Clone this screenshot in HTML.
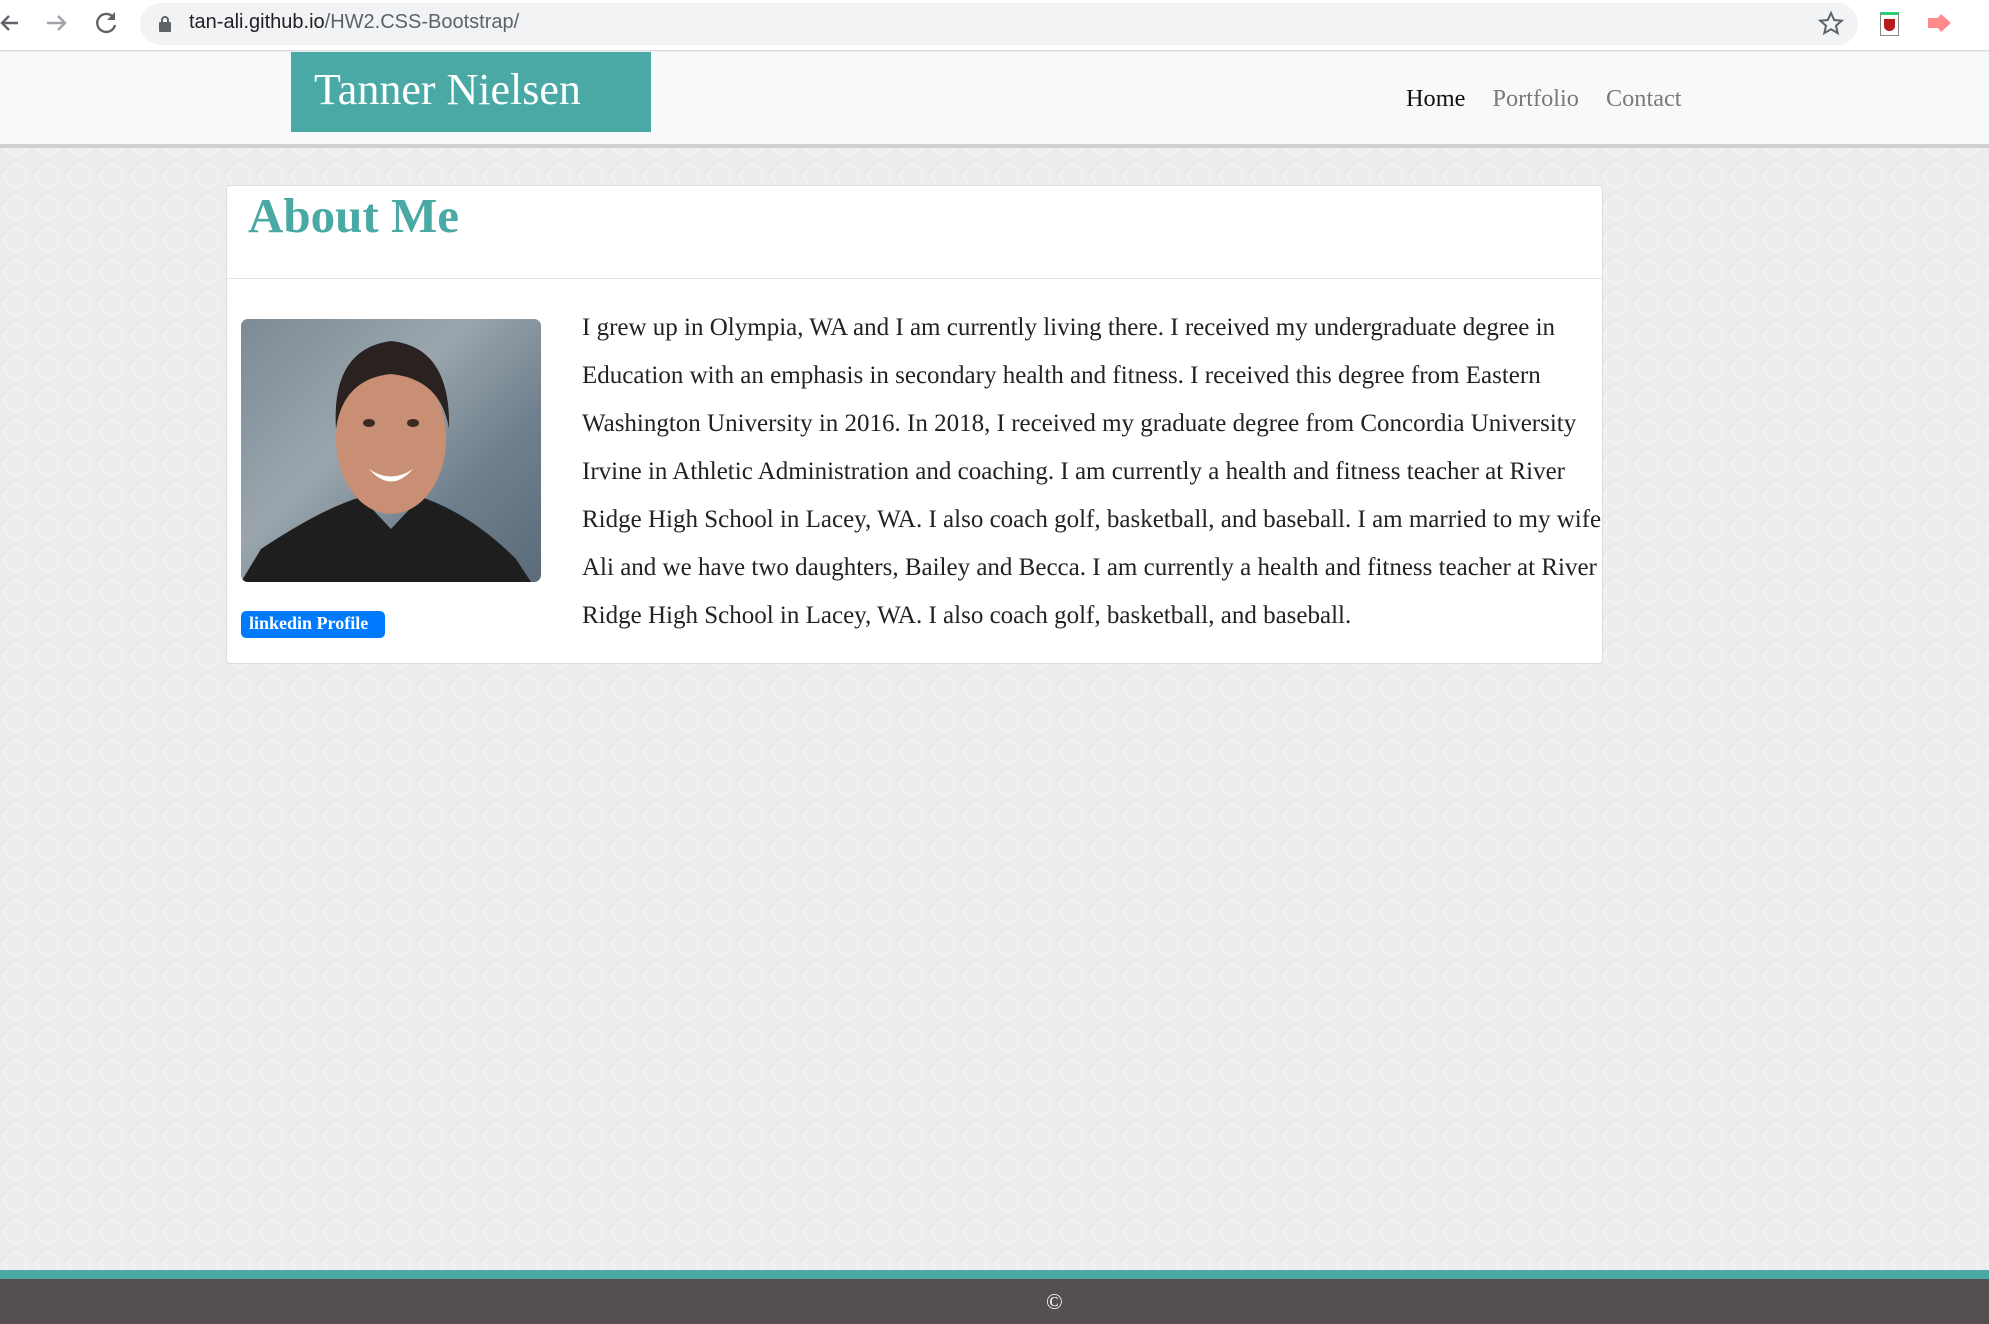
<!DOCTYPE html>
<html><head><meta charset="utf-8">
<style>
*{margin:0;padding:0;box-sizing:border-box}
body{width:1989px;height:1324px;overflow:hidden;position:relative;font-family:"Liberation Serif",serif;
background-color:#ededed;
background-image:radial-gradient(circle at 50% 50%, transparent 9px, rgba(255,255,255,.25) 10px, rgba(255,255,255,.25) 12px, transparent 13px),
radial-gradient(circle at 0 0, transparent 9px, rgba(0,0,0,.015) 10px, rgba(0,0,0,.015) 12px, transparent 13px);
background-size:32px 32px;}
.chrome{position:absolute;left:0;top:0;width:1989px;height:51px;background:#fff;border-bottom:1px solid #dadce0}
.addr{position:absolute;left:140px;top:3px;width:1718px;height:42px;border-radius:21px;background:#f1f3f4}
.url{position:absolute;left:189px;top:11px;font-family:"Liberation Sans",sans-serif;font-size:20px;color:#202124}
.url span{color:#5f6368}
.nav{position:absolute;left:0;top:52px;width:1989px;height:96px;background:#f8f9fa;border-bottom:4px solid #d0d0d0}
.brand{position:absolute;left:291px;top:0;width:360px;height:80px;background:#4aa9a4;color:#fff;font-size:44px;padding:12px 0 0 23px}
.links{position:absolute;top:33px;font-size:24.3px;left:1406px;color:#666}
.links a{margin-right:21px;color:#7a7a7a}
.links a.h{color:#111}
.card{position:absolute;left:226px;top:185px;width:1377px;height:479px;background:#fff;border:1px solid #ddd;border-radius:4px}
.card .hd{height:93px;border-bottom:1px solid #e3e3e3}
.card h1{position:absolute;left:21px;top:1px;font-size:49px;color:#4aa9a4;font-weight:bold}
.photo{position:absolute;left:14px;top:133px;width:300px;height:263px;border-radius:7px;overflow:hidden;background:linear-gradient(135deg,#7d8a94,#9aa5ad 40%,#6f7f8c 70%,#5c6b78)}
.btn{position:absolute;left:14px;top:425px;width:144px;height:27px;background:#007bff;border-radius:5px;color:#fff;font-weight:bold;font-size:18px;padding:2px 0 0 8px}
.txt{position:absolute;left:355px;font-size:25px;line-height:48px;color:#222;white-space:nowrap;top:118px}
.foot{position:absolute;left:0;top:1270px;width:1989px;height:54px;background:#554f4f;border-top:9px solid #4aa9a4;color:#fff;font-size:22px}
.foot span{position:absolute;left:1046px;top:10px}
</style></head><body>
<div class="chrome">
<svg width="130" height="51" style="position:absolute;left:0;top:0"><g stroke="#5f6368" stroke-width="2.4" fill="none"><path d="M18 23H2M9 16l-7 7 7 7"/><path d="M47 23h18M58 16l7 7-7 7" stroke="#a0a4a8"/><path d="M113 17a9 9 0 1 0 2 8"/></g><path d="M115 12v8h-8z" fill="#5f6368"/></svg>
<div class="addr"></div>
<svg width="16" height="18" style="position:absolute;left:157px;top:15px"><rect x="2" y="7" width="12" height="10" rx="1" fill="#5f6368"/><path d="M5 8V5a3 3 0 0 1 6 0v3" stroke="#5f6368" stroke-width="2" fill="none"/></svg>
<div class="url">tan-ali.github.io<span>/HW2.CSS-Bootstrap/</span></div>
<svg width="26" height="26" style="position:absolute;left:1818px;top:11px"><path d="M13 2l3.2 7 7.5.7-5.7 5 1.7 7.4L13 18.3 6.3 22.1 8 14.7 2.3 9.7l7.5-.7z" stroke="#5f6368" stroke-width="2" fill="none"/></svg>
<div style="position:absolute;left:1880px;top:12px;width:19px;height:24px;border:1px solid #888;border-top:3px solid #2ecc71;background:#fff"><div style="margin:4px 3px;width:11px;height:12px;background:#b71c1c;border-radius:0 0 5px 5px"></div></div>
<svg width="26" height="20" style="position:absolute;left:1927px;top:13px"><path d="M1 5h10l3-4 10 9-10 9-3-4H1z" fill="#ff8a8a"/></svg>
</div>
<div class="nav">
<div class="brand">Tanner Nielsen</div>
<div class="links"><a class="h">Home</a> <a>Portfolio</a> <a>Contact</a></div>
</div>
<div class="card">
<div class="hd"></div>
<h1>About Me</h1>
<div class="photo"><svg width="300" height="263">
<path d="M0 263 L20 230 Q80 190 120 178 L150 210 L180 178 Q230 195 275 240 L290 263Z" fill="#1e1e1f"/>
<ellipse cx="150" cy="120" rx="55" ry="75" fill="#c98f74"/>
<path d="M95 110 Q90 30 150 22 Q210 28 208 110 Q200 60 150 55 Q102 60 95 110Z" fill="#2a2220"/>
<path d="M128 150 Q150 165 172 150 Q150 175 128 150Z" fill="#fff"/>
<ellipse cx="128" cy="104" rx="6" ry="4" fill="#3a2a22"/><ellipse cx="172" cy="104" rx="6" ry="4" fill="#3a2a22"/>
</svg></div>
<div class="btn">linkedin Profile</div>
<div class="txt">I grew up in Olympia, WA and I am currently living there. I received my undergraduate degree in<br>Education with an emphasis in secondary health and fitness. I received this degree from Eastern<br>Washington University in 2016. In 2018, I received my graduate degree from Concordia University<br>Irvine in Athletic Administration and coaching. I am currently a health and fitness teacher at River<br>Ridge High School in Lacey, WA. I also coach golf, basketball, and baseball. I am married to my wife<br>Ali and we have two daughters, Bailey and Becca. I am currently a health and fitness teacher at River<br>Ridge High School in Lacey, WA. I also coach golf, basketball, and baseball.</div>
</div>
<div class="foot"><span>©</span></div>
</body></html>
